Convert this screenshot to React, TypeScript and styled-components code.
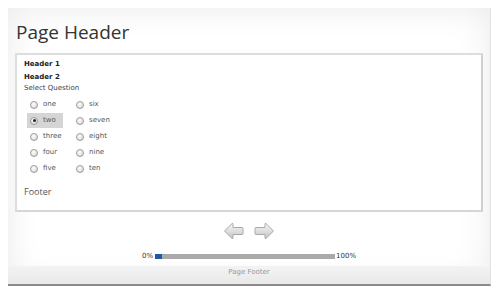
import styled, { createGlobalStyle } from 'styled-components'

const GlobalStyle = createGlobalStyle`
  html, body {
    margin: 0;
    padding: 0;
    background: #ffffff;
  }
  body {
    width: 500px;
    height: 294px;
    overflow: hidden;
    font-family: "DejaVu Sans", Verdana, sans-serif;
  }
`

const options = [
  { label: 'one', checked: false },
  { label: 'two', checked: true },
  { label: 'three', checked: false },
  { label: 'four', checked: false },
  { label: 'five', checked: false },
  { label: 'six', checked: false },
  { label: 'seven', checked: false },
  { label: 'eight', checked: false },
  { label: 'nine', checked: false },
  { label: 'ten', checked: false },
]

const progress = 4

const Arrow = ({ dir }: { dir: 'left' | 'right' }) => (
  <svg width="21" height="18" viewBox="0 0 21 18">
    <defs>
      <linearGradient id={`arrow-${dir}`} x1="0" y1="0" x2="0" y2="1">
        <stop offset="0" stopColor="#f7f7f7" />
        <stop offset="0.55" stopColor="#dcdcdc" />
        <stop offset="1" stopColor="#c4c4c4" />
      </linearGradient>
    </defs>
    <path
      transform={dir === 'right' ? 'translate(21 0) scale(-1 1)' : undefined}
      d="M1.5 9 L9 1.6 Q10 0.8 10 2.2 L10 5.5 L19 5.5 Q20 5.5 20 6.5 L20 11.5 Q20 12.5 19 12.5 L10 12.5 L10 15.8 Q10 17.2 9 16.4 Z"
      fill={`url(#arrow-${dir})`}
      stroke="#a9a9a9"
      strokeWidth="1"
      strokeLinejoin="round"
    />
  </svg>
)

export default function App() {
  return (
    <>
      <GlobalStyle />
      <Frame>
        <Title>Page Header</Title>
        <Panel>
          <Heading>Header 1</Heading>
          <Heading>Header 2</Heading>
          <Prompt>Select Question</Prompt>
          <Options>
            {options.map((o) => (
              <Option key={o.label} $selected={o.checked}>
                <Radio $checked={o.checked} />
                <OptionLabel>{o.label}</OptionLabel>
              </Option>
            ))}
          </Options>
          <PanelFooter>Footer</PanelFooter>
        </Panel>
        <Nav>
          <NavButton aria-label="Previous"><Arrow dir="left" /></NavButton>
          <NavButton aria-label="Next"><Arrow dir="right" /></NavButton>
        </Nav>
        <Progress>
          <ProgressText>0%</ProgressText>
          <Track>
            <Fill style={{ width: `${progress}%` }} />
          </Track>
          <ProgressText>100%</ProgressText>
        </Progress>
        <FooterBar>Page Footer</FooterBar>
      </Frame>
    </>
  )
}

const Frame = styled.div`
  margin: 8px 0 0 8px;
  width: 483px;
  height: 278px;
  box-sizing: border-box;
  padding-top: 12px;
  display: flex;
  flex-direction: column;
  background: #ffffff;
  box-shadow: inset 0 0 34px rgba(0, 0, 0, 0.085);
  border-right: 1px solid #e2e2e2;
  border-bottom: 2px solid #8a8a8a;
`

const Title = styled.h1`
  margin: 0 0 0 8px;
  font-family: "Open Sans", "Liberation Sans", sans-serif;
  font-weight: 400;
  font-size: 19px;
  line-height: 24px;
  color: #333333;
`

const Panel = styled.div`
  margin: 9px 0 0 7px;
  width: 468px;
  height: 159px;
  box-sizing: border-box;
  padding: 3px 7px 0;
  background: #ffffff;
  border: 2px solid #dddddd;
  border-right-color: #d0d0d0;
  border-bottom-color: #d6d6d6;
  display: flex;
  flex-direction: column;
`

const Heading = styled.div`
  font-weight: 700;
  font-size: 7px;
  line-height: 13px;
  color: #222222;
`

const Prompt = styled.div`
  font-size: 7px;
  line-height: 9px;
  color: #444444;
`

const Options = styled.div`
  margin: 4px 0 0 3px;
  display: grid;
  grid-auto-flow: column;
  grid-template-rows: repeat(5, 15px);
  grid-template-columns: 46px 60px;
  row-gap: 1px;
`

const Option = styled.label<{ $selected: boolean }>`
  width: 36px;
  box-sizing: border-box;
  padding: 0 3px;
  display: flex;
  align-items: center;
  gap: 5px;
  white-space: nowrap;
  background: ${(p) => (p.$selected ? '#d5d5d5' : 'transparent')};
`

const Radio = styled.span<{ $checked: boolean }>`
  position: relative;
  width: 8px;
  height: 8px;
  flex: none;
  box-sizing: border-box;
  border-radius: 50%;
  border: 1px solid #9c9c9c;
  background: radial-gradient(circle at 40% 35%, #ffffff 0%, #e6e6e6 55%, #c9c9c9 100%);

  &::after {
    content: '';
    display: ${(p) => (p.$checked ? 'block' : 'none')};
    position: absolute;
    left: 1.5px;
    top: 1.5px;
    width: 3px;
    height: 3px;
    border-radius: 50%;
    background: #222222;
  }
`

const OptionLabel = styled.span`
  font-size: 7px;
  line-height: 9px;
  color: #555555;
`

const PanelFooter = styled.div`
  margin-top: 10px;
  font-family: "Open Sans", "Liberation Sans", sans-serif;
  font-size: 9px;
  line-height: 12px;
  color: #555555;
`

const Nav = styled.div`
  margin-top: 10px;
  display: flex;
  justify-content: center;
  gap: 10px;
`

const NavButton = styled.button`
  padding: 0;
  border: 0;
  background: none;
  width: 21px;
  height: 18px;
  display: block;

  svg {
    display: block;
  }
`

const Progress = styled.div`
  margin-top: 13px;
  display: flex;
  justify-content: center;
  align-items: center;
  gap: 1px;
`

const ProgressText = styled.span`
  font-size: 7px;
  line-height: 7px;
  color: #333333;
`

const Track = styled.div`
  margin-left: 1px;
  width: 180px;
  height: 5px;
  background: #aaaaaa;
  display: flex;
`

const Fill = styled.div`
  height: 100%;
  background: #1f5aa6;
`

const FooterBar = styled.div`
  margin-top: auto;
  height: 18px;
  box-sizing: border-box;
  padding-top: 2px;
  text-align: center;
  font-size: 7px;
  line-height: 9px;
  color: #999999;
  background: linear-gradient(#f3f3f3, #e9e9e9);
`
